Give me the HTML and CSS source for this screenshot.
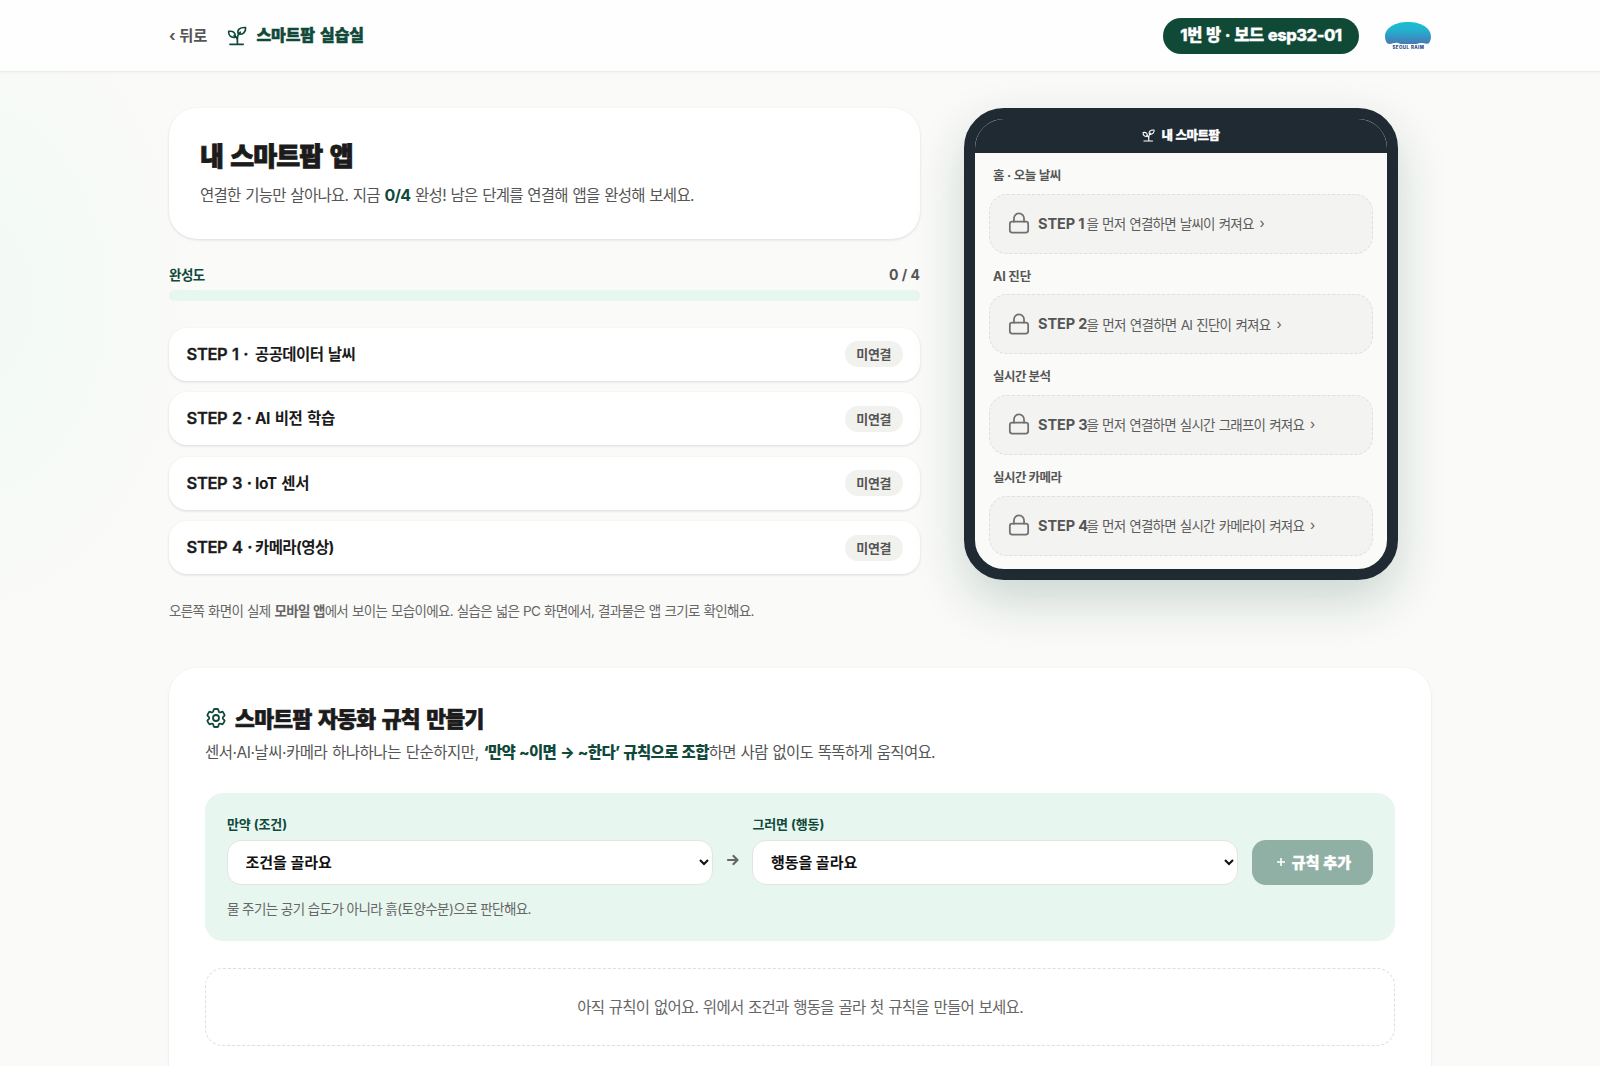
FILE: index.html
```html
<!DOCTYPE html>
<html lang="ko">
<head>
<meta charset="utf-8">
<title>스마트팜 실습실</title>
<link rel="stylesheet" href="styles.css">
</head>
<body>
<svg class="defs" width="0" height="0" aria-hidden="true">
  <symbol id="sprout" viewBox="0 0 24 24"><path d="M3.5 22h16M12.500 22V15M12.500 15.500C12.500 12.500 13.500 9.500 16 7.500M12.500 18C12.500 15 10.500 12.500 8.500 11.500M13.700 9.700C11.500 5 15 1.300 22.300 1.800C22.800 7.200 19 10.800 13.700 9.700ZM9.800 13.500C5 14.500 1.500 11.500 2 6.500C7.500 5.500 10.800 8.500 9.800 13.500Z"/></symbol>
  <symbol id="lock" viewBox="0 0 24 24"><rect x="2" y="10.500" width="20" height="12" rx="2.500"/><path d="M6.500 10.500V7a5.500 5.500 0 0 1 11 0v3.500"/></symbol>
  <symbol id="gear" viewBox="0 0 24 24"><path d="M9.594 3.94c.09-.542.56-.94 1.11-.94h2.593c.55 0 1.02.398 1.11.94l.213 1.281c.063.374.313.686.645.87.074.04.147.083.22.127.325.196.72.257 1.075.124l1.217-.456a1.125 1.125 0 0 1 1.37.49l1.296 2.247a1.125 1.125 0 0 1-.26 1.431l-1.003.827c-.293.241-.438.613-.43.992a7.723 7.723 0 0 1 0 .255c-.008.378.137.75.43.991l1.004.827c.424.35.534.955.26 1.43l-1.298 2.247a1.125 1.125 0 0 1-1.369.491l-1.217-.456c-.355-.133-.75-.072-1.076.124a6.47 6.47 0 0 1-.22.128c-.331.183-.581.495-.644.869l-.213 1.281c-.09.543-.56.94-1.11.94h-2.594c-.55 0-1.019-.398-1.11-.94l-.213-1.281c-.062-.374-.312-.686-.644-.87a6.52 6.52 0 0 1-.22-.127c-.325-.196-.72-.257-1.076-.124l-1.217.456a1.125 1.125 0 0 1-1.369-.49l-1.297-2.247a1.125 1.125 0 0 1 .26-1.431l1.004-.827c.292-.24.437-.613.43-.991a6.932 6.932 0 0 1 0-.255c.007-.38-.138-.751-.43-.992l-1.004-.827a1.125 1.125 0 0 1-.26-1.43l1.297-2.247a1.125 1.125 0 0 1 1.37-.491l1.216.456c.356.133.751.072 1.076-.124.072-.044.146-.086.22-.128.332-.183.582-.495.644-.869l.214-1.28Z"/><circle cx="12" cy="12" r="3"/></symbol>
</svg>
<header class="topbar">
  <div class="topbar-inner">
    <a class="back"><span>‹ 뒤로</span></a>
    <svg class="brand-icon"><use href="#sprout"/></svg>
    <span class="brand">스마트팜 실습실</span>
    <span class="room"><span class="room-text">1번 방 · 보드 esp32-01</span></span>
    <svg class="logo" viewBox="0 0 46 28">
      <defs><linearGradient id="sky" x1="0" y1="0" x2="0" y2="1"><stop offset="0" stop-color="#18bfd0"/><stop offset=".35" stop-color="#23b2d0"/><stop offset="1" stop-color="#4779b4"/></linearGradient></defs>
      <path fill="url(#sky)" d="M2.500 21.500C1 20 0 17.500 0 14.500C0 6 10 0 23 0s23 6 23 14.500C46 17.500 45 20 43.500 21.500C40 22.500 38 20.500 34 21.300C30 22.500 27 22 23 22S16 22.500 13 21C9 20 6 23 2.500 21.500Z"/>
      <text x="7.500" y="27.200" textLength="31.500" font-size="4.400">SEOUL RAIM</text>
    </svg>
  </div>
</header>
<main class="page">
  <div class="overview">
    <div class="left">
      <section class="hero">
        <h1><span>내 스마트팜 앱</span></h1>
        <p><span class="hp1">연결한 기능만 살아나요. 지금 </span><b>0/4</b><span class="hp2"> 완성! 남은 단계를 연결해 앱을 완성해 보세요.</span></p>
      </section>
      <div class="progress-head"><span class="ph1">완성도</span><span class="ph2">0 / 4</span></div>
      <div class="progress"></div>
      <ul class="steps">
        <li><span class="name"><span class="no">STEP 1 · </span><span class="s1">공공데이터 날씨</span></span><span class="badge"><span>미연결</span></span></li>
        <li><span class="name"><span class="no">STEP 2 · </span><span class="s2">AI 비전 학습</span></span><span class="badge"><span>미연결</span></span></li>
        <li><span class="name"><span class="no">STEP 3 · </span><span class="s3">IoT 센서</span></span><span class="badge"><span>미연결</span></span></li>
        <li><span class="name"><span class="no">STEP 4 · </span><span class="s4">카메라(영상)</span></span><span class="badge"><span>미연결</span></span></li>
      </ul>
      <p class="caption"><span>오른쪽 화면이 실제 <b>모바일 앱</b>에서 보이는 모습이에요. 실습은 넓은 PC 화면에서, 결과물은 앱 크기로 확인해요.</span></p>
    </div>
    <aside class="phone">
      <div class="phone-head"><svg><use href="#sprout"/></svg><span>내 스마트팜</span></div>
      <div class="phone-body">
        <h3><span class="l1">홈 · 오늘 날씨</span></h3>
        <div class="locked"><svg><use href="#lock"/></svg><b>STEP 1</b><span class="m1">을 먼저 연결하면 날씨이 켜져요</span><i>›</i></div>
        <h3><span class="l2">AI 진단</span></h3>
        <div class="locked"><svg><use href="#lock"/></svg><b>STEP 2</b><span class="m2">을 먼저 연결하면 AI 진단이 켜져요</span><i>›</i></div>
        <h3><span class="l3">실시간 분석</span></h3>
        <div class="locked"><svg><use href="#lock"/></svg><b>STEP 3</b><span class="m3">을 먼저 연결하면 실시간 그래프이 켜져요</span><i>›</i></div>
        <h3><span class="l4">실시간 카메라</span></h3>
        <div class="locked"><svg><use href="#lock"/></svg><b>STEP 4</b><span class="m4">을 먼저 연결하면 실시간 카메라이 켜져요</span><i>›</i></div>
      </div>
    </aside>
  </div>
  <section class="rules">
    <h2><svg><use href="#gear"/></svg><span>스마트팜 자동화 규칙 만들기</span></h2>
    <p class="lead"><span class="r1">센서·AI·날씨·카메라 하나하나는 단순하지만, </span><b class="r2">‘만약 ~이면 → ~한다’ 규칙으로 조합</b><span class="r3">하면 사람 없이도 똑똑하게 움직여요.</span></p>
    <div class="builder">
      <div class="fields">
        <label class="field"><span class="f1">만약 (조건)</span><select><option>조건을 골라요</option></select></label>
        <svg class="arrow" viewBox="0 0 12 12"><path d="M1 6h9M6.500 2l4 4-4 4"/></svg>
        <label class="field"><span class="f2">그러면 (행동)</span><select><option>행동을 골라요</option></select></label>
        <button disabled><svg viewBox="0 0 8 8"><path d="M.5 4h7M4 .5v7"/></svg><span>규칙 추가</span></button>
      </div>
      <p class="note"><span>물 주기는 공기 습도가 아니라 흙(토양수분)으로 판단해요.</span></p>
    </div>
    <div class="empty"><span>아직 규칙이 없어요. 위에서 조건과 행동을 골라 첫 규칙을 만들어 보세요.</span></div>
  </section>
</main>
</body>
</html>
```
FILE: styles.css
```css
* { box-sizing: border-box; margin: 0; padding: 0; }
body {
  height: 1066px;
  overflow: hidden;
  background: radial-gradient(ellipse 230px 330px at -30px 300px, #f1faf5 0%, rgba(250, 250, 248, 0) 100%), #fafaf8;
  color: #1b1b1b;
  font-family: Inter, "Noto Sans CJK KR", sans-serif;
  font-size: 16px;
}
span, b, i { white-space: pre; }
svg { fill: none; stroke: currentColor; stroke-width: 1.8; stroke-linecap: round; stroke-linejoin: round; flex: none; }
.defs { position: absolute; }

/* Header */
.topbar { height: 72px; background: #fefefe; border-bottom: 1px solid #ececea; box-shadow: 0 1px 2px rgba(0, 0, 0, .03); }
.topbar-inner { width: 1262px; height: 71px; margin: 0 auto; display: flex; align-items: center; }
.back { width: 58px; padding-bottom: 4px; color: #555; font-weight: 700; font-size: 15.3px; }
.brand-icon { width: 20px; height: 20px; color: #10493a; margin-top: 1px; stroke-width: 2; }
.brand { margin-left: 9.5px; padding-bottom: 4px; color: #10493a; font-weight: 900; font-size: 16px; letter-spacing: -.1px; word-spacing: 2px; -webkit-text-stroke: .5px; }
.room { margin-left: auto; width: 196px; height: 36px; border-radius: 18px; background: #104936; color: #fff; display: flex; align-items: center; justify-content: center; font-weight: 800; font-size: 16.5px; letter-spacing: -.48px; word-spacing: 1px; -webkit-text-stroke: .3px; }
.room-text { padding-bottom: 3px; }
.logo { width: 46px; height: 28px; margin-left: 26px; stroke: none; }
.logo text { fill: #1d4a86; font-family: Inter, sans-serif; font-weight: 800; }

/* Overview */
.page { width: 1262px; margin: 36px auto 0; }
.overview { display: grid; grid-template-columns: 751px 434px; column-gap: 44px; align-items: start; }
.hero { height: 131px; padding: 30px 31px; border-radius: 28px; background: #fff; box-shadow: 0 1px 3px rgba(0, 0, 0, .12); }
h1 { font-size: 26px; font-weight: 900; line-height: 38px; letter-spacing: -.9px; word-spacing: 3px; -webkit-text-stroke: .9px; }
.hero p { margin-top: 6px; line-height: 26px; font-size: 15.5px; color: #555; letter-spacing: -.74px; word-spacing: 1px; }
.hero b { color: #10493a; font-size: 16px; font-weight: 700; letter-spacing: -.6px; }
.progress-head { display: flex; justify-content: space-between; margin-top: 26px; height: 20px; line-height: 20px; font-size: 14px; font-weight: 700; color: #555; }
.ph1 { color: #10493a; font-size: 13.5px; letter-spacing: -.5px; }
.progress { height: 11px; margin-top: 5px; border-radius: 6px; background: #e7f6ef; }
.steps { list-style: none; display: grid; gap: 11.5px; margin-top: 26.5px; }
.steps li { height: 53px; padding: 0 17.5px; display: flex; align-items: center; justify-content: space-between; border-radius: 18px; background: #fff; box-shadow: 0 1px 3px rgba(0, 0, 0, .13); font-size: 15.5px; font-weight: 700; }
.name { padding-bottom: 3px; }
.no { display: inline-block; width: 68.5px; font-size: 16.5px; font-weight: 600; letter-spacing: -.35px; word-spacing: .8px; -webkit-text-stroke: .3px; }
.s1, .s4 { letter-spacing: -.6px; word-spacing: 1.5px; }
.s2, .s3 { letter-spacing: -.45px; word-spacing: 1.5px; }
.badge { width: 57.5px; height: 26px; border-radius: 13px; background: #f1f1ee; color: #555; display: flex; align-items: center; justify-content: center; font-size: 13px; letter-spacing: -.3px; }
.badge span { padding-bottom: 1px; }
.caption { margin-top: 25.5px; line-height: 22px; font-size: 13.5px; color: #666; letter-spacing: -.7px; word-spacing: .8px; }

/* Phone preview */
.phone { height: 472px; border: 11px solid #202a33; border-radius: 40px; background: #fafaf8; box-shadow: 0 20px 50px rgba(16, 73, 54, .2); overflow: hidden; }
.phone-head { height: 34px; background: #202a33; color: #fff; display: flex; align-items: center; justify-content: center; gap: 6px; font-size: 12.5px; font-weight: 800; letter-spacing: -.5px; word-spacing: 1px; padding-bottom: 3px; }
.phone-head svg { width: 13px; height: 13px; margin-top: 2px; stroke-width: 2; }
.phone-head span { -webkit-text-stroke: .3px; }
.phone-body { padding: 12px 14px; }
h3 { height: 22px; line-height: 22.5px; padding-left: 4px; font-size: 12.5px; font-weight: 700; color: #555; letter-spacing: -.5px; }
.l1 { letter-spacing: -.6px; word-spacing: .8px; }
.l2 { letter-spacing: -.16px; }
.locked { height: 60px; margin: 6.5px 0 12.2px; padding: 0 0 1px 18px; display: flex; align-items: center; border: 1px dashed #dfdfdc; border-radius: 18px; background: #f3f3f1; color: #5c5c5c; font-size: 13.5px; letter-spacing: -.8px; word-spacing: 1px; }
.locked svg { width: 22px; height: 22px; margin-right: 8px; color: #707070; stroke-width: 1.9; }
.locked b { width: 48.5px; font-size: 14.5px; letter-spacing: -.1px; word-spacing: 0; color: #555; }
.locked i { margin-left: 6px; font-style: normal; }
.m2 { letter-spacing: -.72px; }

/* Automation rules */
.rules { height: 460px; margin-top: 46px; padding: 35px 36px; border-radius: 28px; background: #fff; box-shadow: 0 1px 3px rgba(0, 0, 0, .1); }
h2 { display: flex; align-items: center; height: 30px; font-size: 21.5px; font-weight: 900; letter-spacing: -.6px; word-spacing: 2.5px; }
h2 span { padding-bottom: 1px; -webkit-text-stroke: .7px; }
h2 svg { width: 24px; height: 24px; margin: 1px 7px 0 -1px; color: #10493a; }
.lead { margin-top: 7px; line-height: 26px; font-size: 15.5px; color: #555; word-spacing: 1px; }
.r1 { letter-spacing: -.49px; }
.r2 { letter-spacing: -.64px; color: #10493a; font-weight: 800; }
.r3 { letter-spacing: -.69px; }
.builder { height: 148.5px; margin-top: 27px; padding: 21px 22px; border-radius: 18px; background: #e7f6ef; }
.fields { display: grid; grid-template-columns: 486px 12px 486px 121px; column-gap: 13.7px; align-items: end; }
.field { display: grid; font-size: 13px; font-weight: 700; color: #10493a; line-height: 20px; letter-spacing: -.1px; }
.field span { justify-self: start; }
select { height: 45px; margin-top: 6px; padding: 0 13.5px; border: 1px solid #e2e5e2; border-radius: 14px; background: #fff; color: #111; font: 700 15px Inter, "Noto Sans CJK KR", sans-serif; }
.arrow { width: 12px; height: 12px; margin-bottom: 19px; color: #666; stroke-width: 2.2; }
button { height: 45px; border: 0; border-radius: 14px; background: #90afa5; color: #fff; display: flex; align-items: center; justify-content: center; gap: 7px; padding: 0 0 1px 3px; font: 800 15px Inter, "Noto Sans CJK KR", sans-serif; letter-spacing: .2px; }
button span { -webkit-text-stroke: .4px; }
button svg { width: 8px; height: 8px; stroke-width: 1.6; }
.note { margin-top: 13px; line-height: 22px; font-size: 13.5px; color: #666; letter-spacing: -.57px; }
.empty { height: 78px; margin-top: 27px; padding-bottom: 2px; display: flex; align-items: center; justify-content: center; border: 1px dashed #dededc; border-radius: 18px; font-size: 15.5px; color: #666; letter-spacing: -.74px; word-spacing: 1px; }
```
